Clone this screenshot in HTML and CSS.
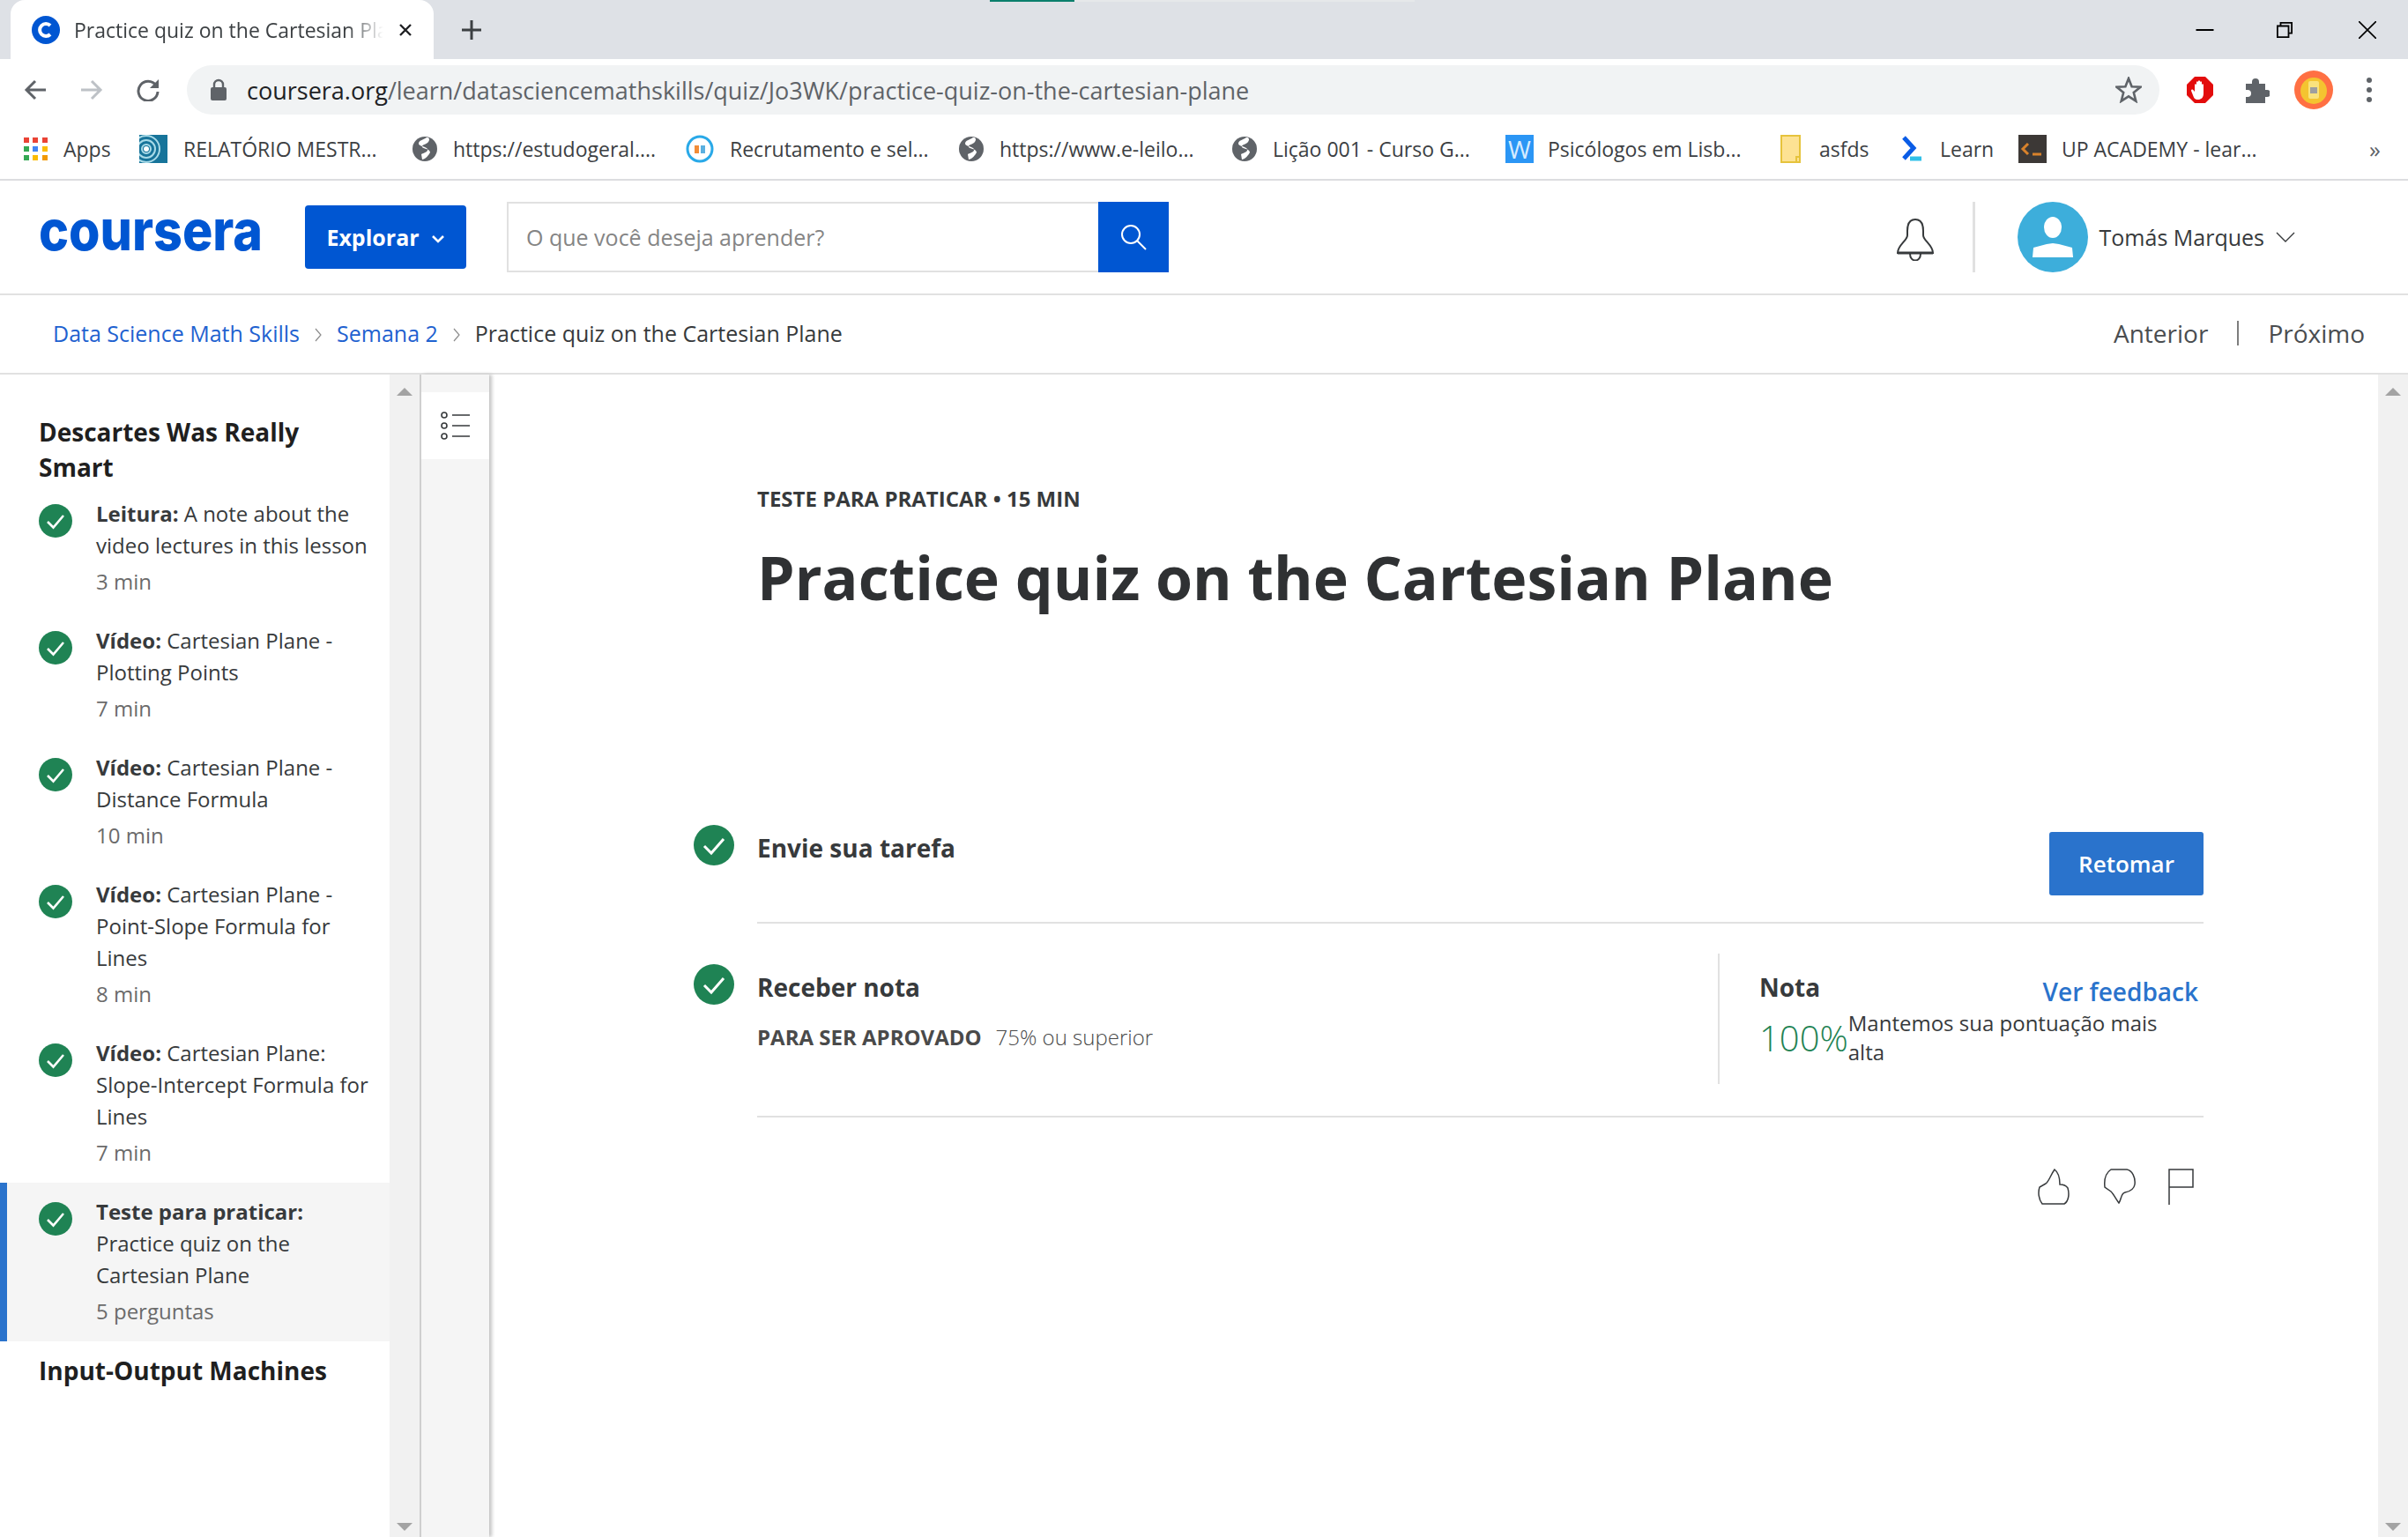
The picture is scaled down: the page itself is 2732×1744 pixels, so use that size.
FILE: index.html
```html
<!DOCTYPE html>
<html lang="pt">
<head>
<meta charset="utf-8">
<title>Practice quiz on the Cartesian Plane</title>
<link rel="stylesheet" href="styles.css">
</head>
<body>
<div class="tabstrip">
  <div class="loadbar"><span class="loadbar-on"></span></div>
  <div class="tab">
    <svg class="favicon" viewBox="0 0 32 32"><circle cx="16" cy="16" r="16" fill="#0056d2"/><path d="M21 11a7 7 0 1 0 0 10" fill="none" stroke="#fff" stroke-width="4"/></svg>
    <span class="tab-title">Practice quiz on the Cartesian Pla</span>
    <svg class="tab-x" viewBox="0 0 16 16"><path d="M2 2l12 12M14 2L2 14" stroke="#202124" stroke-width="2.4"/></svg>
  </div>
  <svg class="newtab" viewBox="0 0 24 24"><path d="M12 1v22M1 12h22" stroke="#3c4043" stroke-width="3"/></svg>
  <div class="winctl">
    <svg class="win-min" viewBox="0 0 20 20"><path d="M0 10h20" stroke="#000" stroke-width="2"/></svg>
    <svg class="win-max" viewBox="0 0 20 20"><path d="M5 5V1h14v13h-4M1 5h14v14H1z" fill="none" stroke="#000" stroke-width="2"/></svg>
    <svg class="win-close" viewBox="0 0 20 20"><path d="M0 0l20 20M20 0L0 20" stroke="#000" stroke-width="1.6"/></svg>
  </div>
</div>

<div class="toolbar">
  <svg class="nav nav-back" viewBox="0 0 26 26"><path d="M25 13H3M13 3L3 13l10 10" fill="none" stroke="#5f6368" stroke-width="3"/></svg>
  <svg class="nav nav-fwd" viewBox="0 0 26 26"><path d="M1 13h22M13 3l10 10-10 10" fill="none" stroke="#bdc1c6" stroke-width="3"/></svg>
  <svg class="nav nav-reload" viewBox="0 0 26 26"><path d="M22 8A11 11 0 1 0 24 15" fill="none" stroke="#5f6368" stroke-width="3"/><path d="M25 1v10H15z" fill="#5f6368"/></svg>
  <div class="omnibox">
    <svg class="lock" viewBox="0 0 20 26"><path d="M5 11V7a5 5 0 0 1 10 0v4" fill="none" stroke="#5f6368" stroke-width="2.4"/><rect x="1" y="10" width="18" height="15" rx="2" fill="#5f6368"/></svg>
    <span class="url"><span class="url-host">coursera.org</span>/learn/datasciencemathskills/quiz/Jo3WK/practice-quiz-on-the-cartesian-plane</span>
    <svg class="star" viewBox="0 0 30 30"><path d="M15 2l3.6 9.2 9.9.6-7.7 6.3 2.5 9.6L15 22.400 6.700 27.700l2.500-9.600L1.500 11.800l9.900-.6z" fill="none" stroke="#5f6368" stroke-width="2.6"/></svg>
  </div>
  <div class="ext">
    <svg class="ext-stop" viewBox="0 0 32 32"><path d="M10 1h12l9 9v12l-9 9H10l-9-9V10z" fill="#e30c0c"/><path d="M10 18V10a1.200 1.200 0 0 1 2 0v5-8a1.200 1.200 0 0 1 2 0v8-9a1.200 1.200 0 0 1 2 0v9-8a1.200 1.200 0 0 1 2 0v9-6a1.200 1.200 0 0 1 2 0v10c0 5-3 7-6 7-4 0-5-2-6-5l-2-5c0-2 2-2 3 0z" fill="#fff"/></svg>
    <svg class="ext-puzzle" viewBox="0 0 30 30"><path d="M3 8h7V6a4 4 0 0 1 8 0v2h7v7h2a4 4 0 0 1 0 8h-2v7H3v-7h2a4 4 0 0 0 0-8H3z" fill="#5f6368"/></svg>
    <svg class="ext-avatar" viewBox="0 0 44 44"><circle cx="22" cy="22" r="22" fill="#ff7043"/><circle cx="22" cy="23" r="15" fill="#f4c430"/><rect x="16" y="12" width="12" height="20" rx="2" fill="#f9e27d"/><rect x="18" y="19" width="8" height="7" fill="#9e9e9e"/></svg>
    <svg class="ext-dots" viewBox="0 0 8 30"><circle cx="4" cy="4" r="3" fill="#5f6368"/><circle cx="4" cy="15" r="3" fill="#5f6368"/><circle cx="4" cy="26" r="3" fill="#5f6368"/></svg>
  </div>
</div>

<div class="bookmarks">
  <div class="bm bm-apps">
    <svg class="bm-ico-apps" viewBox="0 0 27 26"><g fill="#ea4335"><rect width="6" height="6"/><rect x="10" width="6" height="6"/><rect x="21" width="6" height="6"/></g><rect y="10" width="6" height="6" fill="#34a853"/><rect x="10" y="10" width="6" height="6" fill="#4285f4"/><rect x="21" y="10" width="6" height="6" fill="#fbbc05"/><rect y="20" width="6" height="6" fill="#34a853"/><rect x="10" y="20" width="6" height="6" fill="#fbbc05"/><rect x="21" y="20" width="6" height="6" fill="#f29900"/></svg>
    <span>Apps</span>
  </div>
  <div class="bm bm-long">
    <svg class="bm-ico" viewBox="0 0 32 32"><rect width="32" height="32" fill="#17749a"/><g fill="none" stroke="#a9dbe8" stroke-width="2"><circle cx="8" cy="16" r="5"/><circle cx="8" cy="16" r="10"/><circle cx="8" cy="16" r="15"/></g><circle cx="8" cy="16" r="3" fill="#fff"/></svg>
    <span>RELATÓRIO MESTR...</span>
  </div>
  <div class="bm bm-long">
    <svg class="bm-ico-globe" viewBox="0 0 28 28"><circle cx="14" cy="14" r="14" fill="#5f6368"/><path d="M16 1c-4 3-9 3-9 7 0 3 8 3 10 6 1 3-3 4-7 6l1 6c5-1 7-5 9-8 0-4-7-4-9-6-1-3 5-3 7-6 2-3 1-5-2-5z" fill="#fff"/></svg>
    <span>https://estudogeral....</span>
  </div>
  <div class="bm bm-long">
    <svg class="bm-ico" viewBox="0 0 32 32"><circle cx="16" cy="16" r="14" fill="#fff" stroke="#29a9e8" stroke-width="3"/><rect x="10" y="12" width="5" height="9" fill="#f28c38"/><rect x="17" y="12" width="5" height="9" fill="#5bb0e0"/></svg>
    <span>Recrutamento e sel...</span>
  </div>
  <div class="bm bm-long">
    <svg class="bm-ico-globe" viewBox="0 0 28 28"><circle cx="14" cy="14" r="14" fill="#5f6368"/><path d="M16 1c-4 3-9 3-9 7 0 3 8 3 10 6 1 3-3 4-7 6l1 6c5-1 7-5 9-8 0-4-7-4-9-6-1-3 5-3 7-6 2-3 1-5-2-5z" fill="#fff"/></svg>
    <span>https://www.e-leilo...</span>
  </div>
  <div class="bm bm-long">
    <svg class="bm-ico-globe" viewBox="0 0 28 28"><circle cx="14" cy="14" r="14" fill="#5f6368"/><path d="M16 1c-4 3-9 3-9 7 0 3 8 3 10 6 1 3-3 4-7 6l1 6c5-1 7-5 9-8 0-4-7-4-9-6-1-3 5-3 7-6 2-3 1-5-2-5z" fill="#fff"/></svg>
    <span>Lição 001 - Curso G...</span>
  </div>
  <div class="bm bm-w">
    <span class="bm-ico-w">W</span>
    <span>Psicólogos em Lisb...</span>
  </div>
  <div class="bm bm-folder">
    <svg class="bm-ico-folder" viewBox="0 0 23 32"><path d="M1 1h21v30H1z" fill="#fde293" stroke="#e6c33c" stroke-width="2"/><path d="M22 25h-4v6" fill="none" stroke="#e6c33c" stroke-width="2"/></svg>
    <span>asfds</span>
  </div>
  <div class="bm bm-learn">
    <svg class="bm-ico-folder" viewBox="0 0 23 32"><path d="M3 3l11 12-11 12" fill="none" stroke="#0a5ce6" stroke-width="5"/><path d="M10 27h13" stroke="#30c0e8" stroke-width="5"/></svg>
    <span>Learn</span>
  </div>
  <div class="bm bm-up">
    <svg class="bm-ico" viewBox="0 0 32 32"><rect width="32" height="32" fill="#3c3836"/><path d="M11 10l-6 6 6 6" fill="none" stroke="#d9822b" stroke-width="3"/><path d="M16 22h10" stroke="#d9822b" stroke-width="3"/></svg>
    <span>UP ACADEMY - lear...</span>
  </div>
  <span class="bm-more">»</span>
</div>

<header class="site-header">
  <svg class="logo" viewBox="0 0 256 60"><text x="0" y="46" textLength="254" lengthAdjust="spacingAndGlyphs">coursera</text></svg>
  <button class="explore">Explorar
    <svg class="explore-chev" viewBox="0 0 16 10"><path d="M2 2l6 6 6-6" fill="none" stroke="#fff" stroke-width="2.6"/></svg>
  </button>
  <div class="search">
    <span class="search-ph">O que você deseja aprender?</span>
    <span class="search-btn"><svg viewBox="0 0 32 32"><circle cx="13" cy="13" r="10" fill="none" stroke="#fff" stroke-width="2"/><path d="M20.500 20.500L30 30" stroke="#fff" stroke-width="2"/></svg></span>
  </div>
  <div class="header-right">
    <svg class="bell" viewBox="0 0 44 48"><path d="M22 1C15 1 13 7 13 14v5C13 25 2 30 2 39h40C42 30 31 25 31 19v-5C31 7 29 1 22 1z" fill="none" stroke="#373a3c" stroke-width="2"/><path d="M2 39h40" stroke="#373a3c" stroke-width="3"/><path d="M16 40c0 10 12 10 12 0" fill="none" stroke="#373a3c" stroke-width="2"/></svg>
    <span class="header-sep"></span>
    <svg class="user-avatar" viewBox="0 0 80 80"><circle cx="40" cy="40" r="40" fill="#3daedb"/><ellipse cx="40" cy="29" rx="10" ry="12" fill="#fff"/><path d="M17 63l1-11 15-4 7-1 7 1 15 4 1 11z" fill="#fff"/></svg>
    <span class="user-name">Tomás Marques</span>
    <svg class="user-chev" viewBox="0 0 22 12"><path d="M1 1l10 10L21 1" fill="none" stroke="#373a3c" stroke-width="1.400"/></svg>
  </div>
</header>

<nav class="crumbs">
  <a class="crumb-link">Data Science Math Skills</a>
  <svg class="crumb-chev" viewBox="0 0 8 16"><path d="M1 1l6 7-6 7" fill="none" stroke="#8c8c8c" stroke-width="1.200"/></svg>
  <a class="crumb-link">Semana 2</a>
  <svg class="crumb-chev" viewBox="0 0 8 16"><path d="M1 1l6 7-6 7" fill="none" stroke="#8c8c8c" stroke-width="1.200"/></svg>
  <span class="crumb-here">Practice quiz on the Cartesian Plane</span>
  <div class="pager">
    <a class="pager-link">Anterior</a>
    <span class="pager-sep"></span>
    <a class="pager-link">Próximo</a>
  </div>
</nav>

<div class="workspace">
  <aside class="sidebar">
    <h2 class="lesson-title">Descartes Was Really Smart</h2>
    <div class="item">
      <svg class="item-check" viewBox="0 0 38 38"><circle cx="19" cy="19" r="19" fill="#1f8354"/><path d="M10 20l6.500 6.500L28 13" fill="none" stroke="#fff" stroke-width="2.600"/></svg>
      <div class="item-text"><p class="item-name"><b>Leitura:</b> A note about the video lectures in this lesson</p><p class="item-meta">3 min</p></div>
    </div>
    <div class="item">
      <svg class="item-check" viewBox="0 0 38 38"><circle cx="19" cy="19" r="19" fill="#1f8354"/><path d="M10 20l6.500 6.500L28 13" fill="none" stroke="#fff" stroke-width="2.600"/></svg>
      <div class="item-text"><p class="item-name"><b>Vídeo:</b> Cartesian Plane - Plotting Points</p><p class="item-meta">7 min</p></div>
    </div>
    <div class="item">
      <svg class="item-check" viewBox="0 0 38 38"><circle cx="19" cy="19" r="19" fill="#1f8354"/><path d="M10 20l6.500 6.500L28 13" fill="none" stroke="#fff" stroke-width="2.600"/></svg>
      <div class="item-text"><p class="item-name"><b>Vídeo:</b> Cartesian Plane - Distance Formula</p><p class="item-meta">10 min</p></div>
    </div>
    <div class="item">
      <svg class="item-check" viewBox="0 0 38 38"><circle cx="19" cy="19" r="19" fill="#1f8354"/><path d="M10 20l6.500 6.500L28 13" fill="none" stroke="#fff" stroke-width="2.600"/></svg>
      <div class="item-text"><p class="item-name"><b>Vídeo:</b> Cartesian Plane - Point-Slope Formula for Lines</p><p class="item-meta">8 min</p></div>
    </div>
    <div class="item">
      <svg class="item-check" viewBox="0 0 38 38"><circle cx="19" cy="19" r="19" fill="#1f8354"/><path d="M10 20l6.500 6.500L28 13" fill="none" stroke="#fff" stroke-width="2.600"/></svg>
      <div class="item-text"><p class="item-name"><b>Vídeo:</b> Cartesian Plane: Slope-Intercept Formula for Lines</p><p class="item-meta">7 min</p></div>
    </div>
    <div class="item item-current">
      <svg class="item-check" viewBox="0 0 38 38"><circle cx="19" cy="19" r="19" fill="#1f8354"/><path d="M10 20l6.500 6.500L28 13" fill="none" stroke="#fff" stroke-width="2.600"/></svg>
      <div class="item-text"><p class="item-name"><b>Teste para praticar:</b> Practice quiz on the Cartesian Plane</p><p class="item-meta">5 perguntas</p></div>
    </div>
    <h2 class="lesson-title lesson-next">Input-Output Machines</h2>
  </aside>
  <div class="scrollbar scrollbar-side"><span class="arrow-up"></span><span class="arrow-down"></span></div>
  <div class="rail">
    <span class="rail-btn"><svg viewBox="0 0 34 32"><g fill="none" stroke="#373a3c" stroke-width="1.600"><circle cx="4" cy="4" r="3"/><circle cx="4" cy="16" r="3"/><circle cx="4" cy="28" r="3"/></g><path d="M13 4h20M13 16h20M13 28h20" stroke="#373a3c" stroke-width="1.600"/></svg></span>
  </div>
  <main class="content">
    <p class="eyebrow">TESTE PARA PRATICAR • 15 MIN</p>
    <h1 class="quiz-title">Practice quiz on the Cartesian Plane</h1>
    <section class="step step-submit">
      <svg class="step-check" viewBox="0 0 46 46"><circle cx="23" cy="23" r="23" fill="#1f8354"/><path d="M12 24l8 8 14-16" fill="none" stroke="#fff" stroke-width="3"/></svg>
      <div class="step-body">
        <h3 class="step-title">Envie sua tarefa</h3>
        <a class="resume">Retomar</a>
      </div>
    </section>
    <section class="step step-grade">
      <svg class="step-check step-check-grade" viewBox="0 0 46 46"><circle cx="23" cy="23" r="23" fill="#1f8354"/><path d="M12 24l8 8 14-16" fill="none" stroke="#fff" stroke-width="3"/></svg>
      <div class="step-body">
        <div class="grade-left">
          <h3 class="step-title">Receber nota</h3>
          <p class="pass"><b>PARA SER APROVADO</b><span class="pass-value">75% ou superior</span></p>
        </div>
        <div class="grade-right">
          <div class="grade-row">
            <span class="grade-label">Nota</span>
            <a class="grade-link">Ver feedback</a>
          </div>
          <div class="grade-score">
            <span class="grade-pct">100%</span><span class="grade-note">Mantemos sua pontuação mais alta</span>
          </div>
        </div>
      </div>
    </section>
    <div class="feedback">
      <svg class="fb-thumb" viewBox="0 0 37 41"><path d="M19 1C14 8 13 14 9 17l-7 4C0 27 1 35 5 40h25c5-3 6-11 4-18-2-3-6-4-9-4 0-8-2-14-6-17z" fill="none" stroke="#373a3c" stroke-width="1.500"/></svg>
      <svg class="fb-thumb" viewBox="0 0 37 41"><path d="M9 1h18c6 1 10 9 9 17-1 6-6 8-11 9-5 1-4 8-7 12-3-4-6-10-9-13l-7-5C1 12 3 5 9 1z" fill="none" stroke="#373a3c" stroke-width="1.500"/></svg>
      <svg class="fb-flag" viewBox="0 0 29 41"><path d="M1 41V1h27v20H1" fill="none" stroke="#373a3c" stroke-width="1.500"/></svg>
    </div>
  </main>
  <div class="scrollbar scrollbar-main"><span class="arrow-up"></span><span class="arrow-down"></span></div>
</div>
</body>
</html>
```
FILE: styles.css
```css
* { box-sizing: border-box; }
html, body { margin: 0; height: 100%; }
body { height: 1744px; width: 2732px; overflow: hidden; display: flex; flex-direction: column; background: #fff; color: #373a3c; font-family: "Open Sans", "Liberation Sans", sans-serif; }
p, h1, h2, h3 { margin: 0; }
svg { display: block; flex: none; }

.tabstrip { position: relative; height: 67px; background: #dee1e6; display: flex; align-items: center; padding-left: 12px; }
.loadbar { position: absolute; left: 1123px; top: 0; width: 482px; height: 2px; background: #e6e8ea; }
.loadbar-on { display: block; width: 96px; height: 2px; background: #0a7f6c; }
.tab { width: 480px; height: 67px; background: #fff; border-radius: 16px 16px 0 0; display: flex; align-items: center; padding-left: 24px; }
.favicon { width: 32px; height: 32px; }
.tab-title { width: 351px; margin-left: 16px; font-size: 23px; color: #3c4043; white-space: nowrap; overflow: hidden; -webkit-mask-image: linear-gradient(90deg, #000 88%, transparent); mask-image: linear-gradient(90deg, #000 88%, transparent); }
.tab-x { width: 16px; height: 16px; margin-left: 17px; }
.newtab { width: 24px; height: 24px; margin-left: 31px; }
.winctl { margin-left: auto; display: flex; align-items: center; }
.win-min { width: 21px; height: 20px; margin-right: 71px; margin-top: 18px; margin-top: 0; }
.win-max { width: 18px; height: 20px; margin-right: 75px; }
.win-close { width: 20px; height: 20px; margin-right: 36px; }

.toolbar { height: 70px; display: flex; align-items: center; padding: 0 27px; background: #fff; margin-top: 0; }
.nav { width: 26px; height: 26px; }
.nav-back { margin-right: 38px; }
.nav-fwd { margin-right: 38px; }
.nav-reload { margin-right: 31px; }
.omnibox { width: 2238px; height: 56px; background: #f1f3f4; border-radius: 28px; display: flex; align-items: center; padding: 0 20px 0 26px; }
.lock { width: 20px; height: 26px; }
.url { margin-left: 22px; font-size: 27px; color: #5f6368; white-space: nowrap; }
.url-host { color: #202124; }
.star { width: 30px; height: 30px; margin-left: auto; }
.ext { display: flex; align-items: center; margin-left: 30px; }
.ext-stop { width: 32px; height: 32px; }
.ext-puzzle { width: 30px; height: 30px; margin-left: 33px; }
.ext-avatar { width: 44px; height: 44px; margin-left: 28px; }
.ext-dots { width: 8px; height: 30px; margin-left: 37px; }

.bookmarks { height: 68px; display: flex; align-items: center; padding-left: 27px; border-bottom: 2px solid #dcdde0; padding-bottom: 2px; font-size: 23px; color: #3c4043; white-space: nowrap; }
.bm { display: flex; align-items: center; flex: none; }
.bm-apps { width: 131px; gap: 18px; }
.bm-long { width: 310px; gap: 18px; }
.bm-w { width: 312px; gap: 16px; }
.bm-folder { width: 137px; gap: 21px; }
.bm-learn { width: 133px; gap: 21px; }
.bm-up { width: 300px; gap: 17px; }
.bm-ico-apps { width: 27px; height: 26px; }
.bm-ico { width: 32px; height: 32px; }
.bm-ico-globe { width: 28px; height: 28px; }
.bm-ico-folder { width: 23px; height: 32px; }
.bm-ico-w { width: 32px; height: 32px; background: #2b96f5; color: #d7ecff; font-size: 28px; line-height: 32px; text-align: center; }
.bm-more { margin-left: 98px; font-size: 26px; color: #5f6368; }

.site-header { height: 130px; display: flex; align-items: center; padding-left: 44px; border-bottom: 2px solid #e1e1e1; }
.logo { width: 256px; height: 60px; margin-top: -2px; }
.logo text { font-family: "Inter", "Open Sans", sans-serif; font-weight: 800; font-size: 64px; fill: #0056d2; }
.explore { width: 183px; height: 72px; margin-left: 46px; background: #0056d2; border: 0; border-radius: 4px; color: #fff; font: 700 25px "Open Sans", sans-serif; display: flex; align-items: center; justify-content: center; gap: 13px; padding: 0; }
.explore-chev { width: 16px; height: 10px; margin-top: 4px; }
.search { width: 751px; height: 80px; margin-left: 46px; border: 2px solid #e1e1e1; border-right: 0; display: flex; align-items: center; justify-content: space-between; padding-left: 20px; }
.search-ph { font-size: 25px; color: #858585; }
.search-btn { width: 80px; height: 80px; background: #0056d2; display: flex; align-items: center; justify-content: center; margin-right: 0; }
.search-btn svg { width: 32px; height: 32px; }
.header-right { margin-left: auto; display: flex; align-items: center; padding-right: 128px; }
.bell { width: 44px; height: 48px; margin-top: 6px; }
.header-sep { width: 3px; height: 80px; background: #e1e1e1; margin-left: 43px; }
.user-avatar { width: 80px; height: 80px; margin-left: 48px; }
.user-name { margin-left: 13px; font-size: 25px; color: #373a3c; white-space: nowrap; }
.user-chev { width: 22px; height: 12px; margin-left: 13px; }

.crumbs { height: 90px; display: flex; align-items: center; padding-left: 60px; border-bottom: 2px solid #e1e1e1; font-size: 25px; padding-bottom: 2px; }
.crumb-link { color: #1f62d0; }
.crumb-chev { width: 8px; height: 16px; margin: 4px 17px 0; }
.crumb-here { color: #373a3c; }
.pager { margin-left: auto; display: flex; align-items: center; padding-right: 49px; font-size: 28px; color: #4a4d50; }
.pager-sep { width: 2px; height: 28px; background: #7d7d7d; margin: 0 33px; }

.workspace { flex: 1; min-height: 0; display: flex; }
.sidebar { width: 442px; flex: none; padding-top: 45px; overflow: hidden; }
.lesson-title { font-size: 28px; font-weight: 700; line-height: 40px; color: #1f1f1f; padding: 0 60px 0 44px; }
.item { display: flex; padding: 15px 20px 14px 44px; }
.item-current { background: #f5f5f5; box-shadow: inset 8px 0 0 #2a73cc; }
.item-check { width: 38px; height: 38px; margin-top: 7px; }
.item-text { margin-left: 27px; }
.item-name { font-size: 24px; line-height: 36px; color: #373a3c; }
.item-meta { font-size: 24px; line-height: 40px; margin-top: 3px; color: #6b6b6b; }
.lesson-next { margin-top: 13px; padding-right: 0; }

.scrollbar { width: 34px; flex: none; background: #f1f1f1; position: relative; }
.scrollbar-side { border-right: 2px solid #cfcfcf; width: 36px; }
.arrow-up, .arrow-down { position: absolute; left: 8px; width: 0; height: 0; border-left: 9px solid transparent; border-right: 9px solid transparent; }
.arrow-up { top: 15px; border-bottom: 9px solid #a3a3a3; }
.arrow-down { bottom: 7px; border-top: 9px solid #a3a3a3; }

.rail { width: 77px; flex: none; background: #f5f5f5; box-shadow: 3px 0 4px #c4c4c4; padding-top: 20px; }
.rail-btn { display: flex; align-items: center; justify-content: center; height: 76px; background: #fff; }
.rail-btn svg { width: 34px; height: 32px; }

.content { flex: 1; min-width: 0; padding: 125px 198px 0 304px; }
.eyebrow { font-size: 24px; line-height: 32px; font-weight: 700; color: #373a3c; }
.quiz-title { font-size: 68px; line-height: 90px; margin-top: 28px; font-weight: 700; color: #2f3133; }
.step { display: flex; margin-left: -72px; }
.step-submit { margin-top: 236px; }
.step-check { width: 46px; height: 46px; margin-right: 26px; }
.step-check-grade { margin-top: 46px; }
.step-body { flex: 1; display: flex; border-bottom: 2px solid #e1e1e1; }
.step-submit .step-body { height: 112px; justify-content: space-between; }
.step-title { font-size: 28px; line-height: 52px; font-weight: 700; color: #373a3c; }
.resume { width: 175px; height: 72px; margin-top: 8px; background: #2a73cc; border-radius: 3px; color: #fff; font-size: 26px; font-weight: 600; display: flex; align-items: center; justify-content: center; }
.grade-left { flex: 1; padding-top: 46px; }
.pass { font-size: 24px; line-height: 36px; margin-top: 13px; color: #4a4a4a; }
.pass-value { margin-left: 16px; font-weight: 300; }
.grade-right { width: 551px; height: 148px; margin: 34px 0 36px; border-left: 2px solid #e1e1e1; padding: 12px 6px 0 45px; }
.grade-row { display: flex; justify-content: space-between; }
.grade-label { font-size: 28px; line-height: 52px; font-weight: 700; }
.grade-link { font-size: 28px; line-height: 62px; height: 52px; color: #2a73cc; font-weight: 600; }
.grade-score { display: flex; align-items: center; height: 56px; margin-top: 3px; }
.grade-pct { font-size: 40px; font-weight: 300; color: #1f8354; }
.grade-note { font-size: 24px; }
.feedback { display: flex; justify-content: flex-end; align-items: flex-start; margin-top: 58px; padding-right: 11px; }
.fb-thumb { width: 37px; height: 41px; margin-right: 37px; }
.fb-flag { width: 29px; height: 41px; }
```
